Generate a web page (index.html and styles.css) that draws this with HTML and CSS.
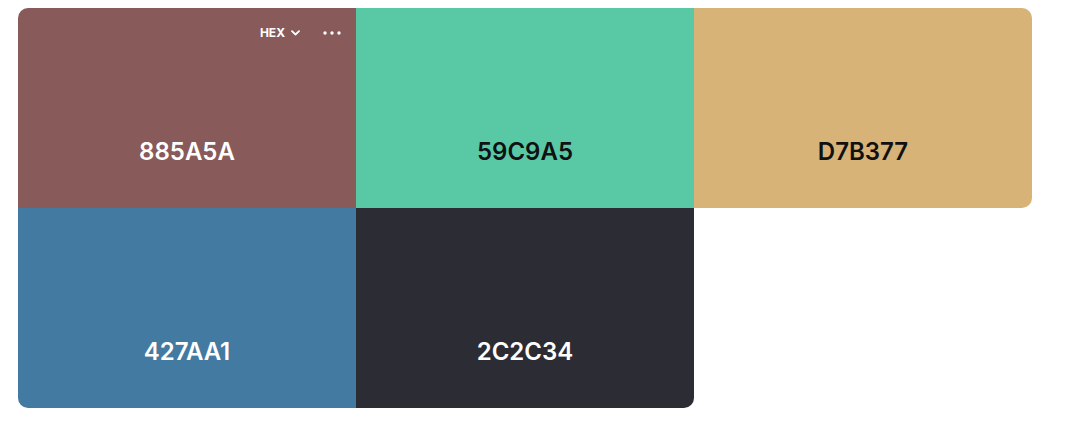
FILE: index.html
```html
<!DOCTYPE html>
<html>
<head>
<meta charset="utf-8">
<link rel="stylesheet" href="styles.css">
</head>
<body>
<div class="palette">
  <div class="swatch s1 light">
    <div class="tools">
      <span class="fmt">HEX <svg class="chev" width="9" height="6" viewBox="0 0 9 6"><path d="M1 1.2 L4.5 4.5 L8 1.2" fill="none" stroke="#fff" stroke-width="1.8" stroke-linecap="round" stroke-linejoin="round"/></svg></span>
      <svg class="dots" width="18" height="4" viewBox="0 0 18 4"><circle cx="2" cy="2" r="1.7" fill="#fff"/><circle cx="9" cy="2" r="1.7" fill="#fff"/><circle cx="16" cy="2" r="1.7" fill="#fff"/></svg>
    </div>
    <span class="code">885A5A</span>
  </div>
  <div class="swatch s2 dark"><span class="code">59C9A5</span></div>
  <div class="swatch s3 dark"><span class="code">D7B377</span></div>
  <div class="swatch s4 light"><span class="code">427AA1</span></div>
  <div class="swatch s5 light"><span class="code">2C2C34</span></div>
</div>
</body>
</html>
```
FILE: styles.css
```css
html, body { margin: 0; padding: 0; background: #fff; }
body { padding: 8px 18px; font-family: Inter, "Noto Sans", sans-serif; }
.palette {
  display: grid;
  grid-template-columns: repeat(3, 338px);
  grid-template-rows: repeat(2, 200px);
}
.swatch {
  position: relative;
  display: flex;
  flex-direction: column;
  align-items: center;
  justify-content: flex-end;
  padding-bottom: 42px;
  box-sizing: border-box;
}
.code { font-size: 24px; font-weight: 600; line-height: 29px; letter-spacing: 0; }
.light .code { color: #fff; }
.dark .code { color: #111; }
.s1 { background: #885A5A; border-top-left-radius: 10px; }
.s2 { background: #59C9A5; }
.s3 { background: #D7B377; border-top-right-radius: 10px; border-bottom-right-radius: 10px; }
.s4 { background: #427AA1; border-bottom-left-radius: 10px; }
.s5 { background: #2C2C34; border-bottom-right-radius: 10px; }
.tools {
  position: absolute;
  top: 18px;
  right: 15px;
  display: flex;
  align-items: center;
  gap: 23px;
  color: #fff;
}
.fmt { font-size: 12px; font-weight: 700; line-height: 14px; display: flex; align-items: center; gap: 6px; }
.chev { display: block; }
.dots { display: block; }
```
